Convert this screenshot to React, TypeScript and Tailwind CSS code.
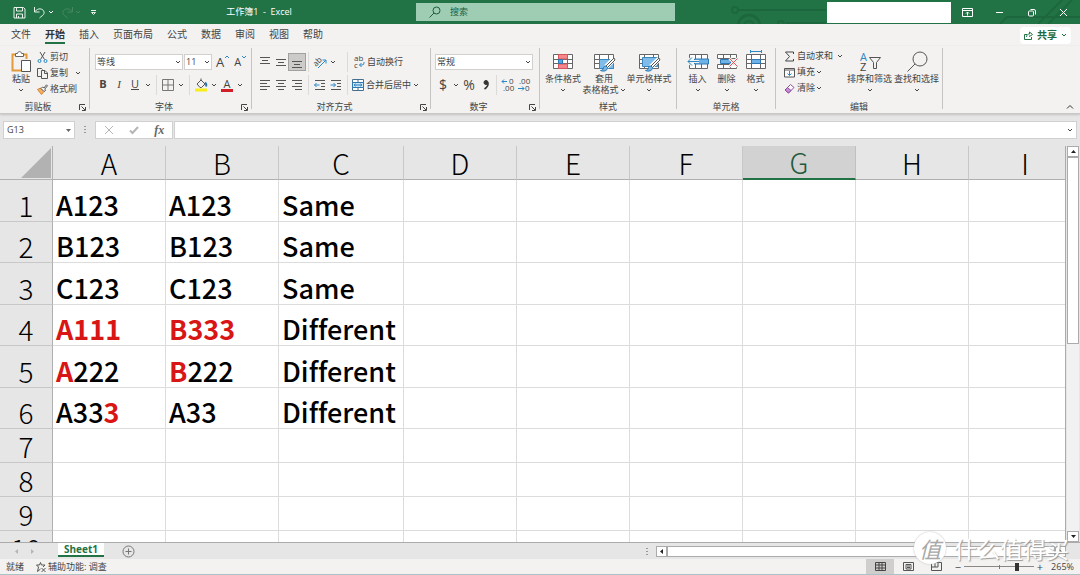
import React from "react";

type IconProps = { children: React.ReactNode; size?: number; className?: string };

const Icon = ({ children, size = 14, className = "" }: IconProps) => (
  <svg
    width={size}
    height={size}
    viewBox={`0 0 ${size} ${size}`}
    fill="none"
    stroke="#555555"
    aria-hidden="true"
    className={`shrink-0 overflow-visible ${className}`}
  >
    {children}
  </svg>
);

const Chevron = ({ className = "" }: { className?: string }) => (
  <svg width="6" height="6" viewBox="0 0 6 6" fill="none" stroke="currentColor" aria-hidden="true" className={`shrink-0 ${className}`}>
    <path d="M1 2l2 2 2-2" />
  </svg>
);

const Tool = ({ label, active, children }: { label: string; active?: boolean; children: React.ReactNode }) => (
  <button
    aria-label={label}
    className={`w-4 h-4 shrink-0 flex items-center justify-center ${active ? "bg-[#cdcbca] outline outline-[#a3a1a0]" : ""}`}
  >
    {children}
  </button>
);

const More = ({ label }: { label: string }) => (
  <button aria-label={label} className="w-2.5 h-4 shrink-0 flex items-center justify-center">
    <Chevron />
  </button>
);

const Rule = () => <div className="w-px h-5 mx-[3px] shrink-0 bg-[#dcdad9]" />;

const Group = ({ title, launcher, width, children }: { title: string; launcher?: boolean; width: string; children: React.ReactNode }) => (
  <>
    <section aria-label={title} className={`${width} shrink-0 flex flex-col`}>
      <div className="h-[55px]">{children}</div>
      <div className="h-3 flex items-center">
        <span className="flex-1 text-center">{title}</span>
        {launcher && (
          <button aria-label={`${title}设置`} className="w-3 h-3 mr-px flex items-center justify-center">
            <Icon size={7}>
              <path d="M.5 6V.5H6M2.5 2.5L6 6M6.5 3v3.5H3" stroke="#444444" />
            </Icon>
          </button>
        )}
      </div>
    </section>
    <div className="w-px shrink-0 mt-[2px] mb-1 bg-[#c6c4c3]" />
  </>
);

const BigButton = ({ icon, lines, width }: { icon: React.ReactNode; lines: string[]; width: string }) => (
  <button className={`${width} shrink-0 flex flex-col items-center pt-[5px] whitespace-nowrap`}>
    <span className="h-[22px] flex items-center">{icon}</span>
    <span className="leading-[11px]">{lines[0]}</span>
    <span className="h-[11px] leading-[11px] flex items-center gap-px">
      {lines[1]}
      <Chevron />
    </span>
  </button>
);

const SmallButton = ({ icon, label, more, gap = "gap-0.5" }: { icon: React.ReactNode; label: string; more?: boolean; gap?: string }) => (
  <button className="h-4 flex items-center gap-[2px] whitespace-nowrap">
    {icon}
    <span className={`flex items-center ${gap}`}>
      {label}
      {more && <Chevron />}
    </span>
  </button>
);

const Lines = ({ rows, y = 3 }: { rows: number[][]; y?: number }) => (
  <Icon size={12}>
    {rows.map(([from, to], i) => (
      <path key={i} d={`M${from} ${y + i * 3 - 0.5}H${to}`} />
    ))}
  </Icon>
);

const TableBase = () => (
  <>
    <path d="M1.5 3.5h19v14h-19z" fill="#ffffff" stroke="#666666" />
    <path d="M1.5 8.5h19M1.5 12.5h19M6.5 3.5v14M15.5 3.5v14" stroke="#666666" />
  </>
);

const Brush = () => (
  <>
    <path d="M21 8l-8 8" stroke="#ffffff" strokeWidth="5" />
    <path d="M21 7l-8 8 1.500 1.500L22 9z" fill="#ffffff" stroke="#555555" />
    <path d="M13 15c-2 0-2.500 1-3 3-.4 1-1.500 1.500-2.500 1.500 3 1.300 7 .5 7-3z" fill="#7ab8e6" stroke="#2675b0" />
  </>
);

const icons = {
  paste: (
    <Icon size={22}>
      <path d="M5 3.500H2.500v16H11" stroke="#e39a3b" strokeWidth="2" />
      <path d="M13 3.500h3.500V8" stroke="#e39a3b" strokeWidth="2" />
      <path d="M5.500 5.500v-3h2c0-2.500 4-2.500 4 0h2v3z" fill="#ffffff" stroke="#666666" />
      <path d="M11.500 9.500h9v11h-9z" fill="#ffffff" stroke="#555555" />
    </Icon>
  ),
  cut: (
    <Icon size={11}>
      <path d="M3 0l4.500 7.500M8 0L3.500 7.500" stroke="#555555" />
      <circle cx="2.500" cy="9" r="1.500" stroke="#2b88c4" />
      <circle cx="8.500" cy="9" r="1.500" stroke="#2b88c4" />
    </Icon>
  ),
  copy: (
    <Icon size={11}>
      <path d="M4 8.500H.5v-8h4l1 1M4.500 2.500h3.500l2.500 2.500v5.500h-6zM7.500 2.500V5.500h3" />
    </Icon>
  ),
  painter: (
    <Icon size={11}>
      <path d="M.5 5.500l3-1.500 3.500 3.500-2.500 3z" fill="#f3b163" stroke="#d9822b" />
      <path d="M4 4.500l1.500-1.500 1.500 1L9.500.8l1 1L7.800 5l.7 1.500L7 7.500z" fill="#ffffff" />
    </Icon>
  ),
  border: (
    <Icon size={12}>
      <path d="M.5.5h11v11H.5zM6 .5v11M.5 6h11" stroke="#777777" />
    </Icon>
  ),
  fill: (
    <Icon size={14}>
      <path d="M3 6l4-4 4 4-3.500 3.500H6zM7 2v-1.500" stroke="#555555" />
      <path d="M11 4.500c1.500 1 1.500 2.500 1 4" stroke="#2b78b4" strokeWidth="2" />
      <path d="M1 12h12" stroke="#f7ee1a" strokeWidth="3" />
    </Icon>
  ),
  orient: (
    <Icon size={12}>
      <text x="-1" y="8" fontSize="8" fill="#444444" stroke="none" transform="rotate(-45 4 6)">ab</text>
      <path d="M4 12L11.500 4.500M8.500 4H12V7.500" stroke="#2b88c4" />
    </Icon>
  ),
  outdent: (
    <Icon size={12}>
      <path d="M1 1.500h10M7 4.500h4M7 7.500h4M1 10.500h10" />
      <path d="M5.500 6h-5M2.500 4l-2 2 2 2" stroke="#2b88c4" />
    </Icon>
  ),
  indent: (
    <Icon size={12}>
      <path d="M1 1.500h10M7 4.500h4M7 7.500h4M1 10.500h10" />
      <path d="M.5 6h5M3.500 4l2 2-2 2" stroke="#2b88c4" />
    </Icon>
  ),
  wrap: (
    <Icon size={12}>
      <text x="1" y="5" fontSize="8" fill="#444444" stroke="none">ab</text>
      <text x="1" y="12" fontSize="8" fill="#444444" stroke="none">c</text>
      <path d="M11 6v1q0 2-2 2H6.500M8.500 7l-2 2 2 2" stroke="#2b88c4" />
    </Icon>
  ),
  merge: (
    <Icon size={12}>
      <path d="M.5.5h11v11H.5z" fill="#ffffff" stroke="#44708f" />
      <path d="M.5 3.500h11v5H.5z" fill="#cbe6f7" stroke="#2b78b4" />
      <path d="M6 .5v3M6 8.500v3" stroke="#44708f" />
      <path d="M2 6h8M3.500 4.800L2.200 6l1.300 1.200M8.500 4.800L9.800 6 8.500 7.200" stroke="#2b78b4" />
    </Icon>
  ),
  moreDecimals: (
    <Icon size={14}>
      <path d="M6 3.500H1M3 1.500l-2 2 2 2" stroke="#2b88c4" />
      <text x="8" y="6" fontSize="8" fill="#444444" stroke="none">0</text>
      <text x="2" y="13" fontSize="8" fill="#444444" stroke="none">.00</text>
    </Icon>
  ),
  lessDecimals: (
    <Icon size={14}>
      <path d="M1 10.500h6M5 8.500l2 2-2 2" stroke="#2b88c4" />
      <text x="2" y="6" fontSize="8" fill="#444444" stroke="none">.00</text>
      <text x="8" y="13" fontSize="8" fill="#444444" stroke="none">0</text>
    </Icon>
  ),
  conditional: (
    <Icon size={22}>
      <TableBase />
      <path d="M6.500 3.500h9v4.500h-9zM6.500 13h9v4.500h-9z" fill="#f5868c" stroke="#d5545c" />
      <path d="M6.500 8.500h4v4h-4z" fill="#5ba5dc" stroke="#2b78b4" />
    </Icon>
  ),
  tableFormat: (
    <Icon size={22}>
      <TableBase />
      <path d="M6.500 8.500h14v9h-14z" fill="#7fbcea" stroke="#3a86bf" />
      <Brush />
    </Icon>
  ),
  cellStyle: (
    <Icon size={22}>
      <TableBase />
      <path d="M4.500 6.500h15v9h-15z" fill="#7fbcea" stroke="#3a86bf" />
      <Brush />
    </Icon>
  ),
  insert: (
    <Icon size={24}>
      <path d="M3.500 4.500h18v14h-18zM9.500 4.500v14M15.500 4.500v14" fill="#ffffff" stroke="#666666" />
      <path d="M8.500 9h14v5h-14z" fill="#6fb3e6" stroke="#2b78b4" />
      <path d="M13 11.500H2M6 7.500l-4 4 4 4" stroke="#f3f2f1" strokeWidth="3" />
      <path d="M13 11.500H2M6 7.500l-4 4 4 4" stroke="#2b88c4" />
    </Icon>
  ),
  remove: (
    <Icon size={22}>
      <path d="M1.500 3.500h19v4h-19zM1.500 13.500h19v4h-19zM7.500 3.500v4M14.500 3.500v4M7.500 13.500v4M14.500 13.500v4" fill="#ffffff" stroke="#666666" />
      <path d="M4.500 8.500h10v4h-10z" fill="#6fb3e6" stroke="#2b78b4" />
      <path d="M13.500 7.500l8 8M21.500 7.500l-8 8" stroke="#f3f2f1" strokeWidth="3" />
      <path d="M13.500 7.500l8 8M21.500 7.500l-8 8" stroke="#e0555c" />
    </Icon>
  ),
  format: (
    <Icon size={22}>
      <path d="M1.500 3.500h19v14h-19z" fill="#ffffff" stroke="#666666" />
      <path d="M1.500 8.500h19M1.500 12.500h19M6.500 3.500v14M15.500 3.500v14" stroke="#666666" />
      <path d="M6.500 8.500h9v4h-9z" fill="#6fb3e6" stroke="#2b78b4" />
      <path d="M5 .5h12M5.500-1v3M16.500-1v3" stroke="#2b88c4" />
    </Icon>
  ),
  sum: (
    <Icon size={11}>
      <path d="M9.500 3V1H1.500L5.500 5.500 1.500 10h8V8" stroke="#444444" />
    </Icon>
  ),
  fillDown: (
    <Icon size={11}>
      <path d="M.5 1.500h10v8.500H.5zM.5 3h10" fill="#ffffff" />
      <path d="M5.500 4v4.500M3.500 6.500l2 2 2-2" stroke="#2b88c4" />
    </Icon>
  ),
  clear: (
    <Icon size={11}>
      <path d="M1 7l5.500-5.500 3.500 3L4.500 10z" fill="#ffffff" stroke="#8e4a9e" />
      <path d="M1 7l2.500-2.500 3.500 3L4.500 10z" fill="#c58ed2" stroke="#8e4a9e" />
    </Icon>
  ),
  sort: (
    <Icon size={22}>
      <text x="1" y="10" fontSize="11" fill="#2b88c4" stroke="none">A</text>
      <text x="1" y="20" fontSize="11" fill="#444444" stroke="none">Z</text>
      <path d="M10.500 6.500h11l-4 5v6h-3v-6z" />
    </Icon>
  ),
  find: (
    <Icon size={22}>
      <circle cx="14" cy="8" r="7" />
      <path d="M9 13l-7.500 7.500" />
    </Icon>
  ),
};

const tabs = ["文件", "开始", "插入", "页面布局", "公式", "数据", "审阅", "视图", "帮助"];

const TitleBar = () => (
  <header className="relative h-6 shrink-0 flex items-center bg-[#217346] text-white">
    <svg width="360" height="24" fill="none" stroke="#1d673f" aria-hidden="true" className="absolute right-0 top-0">
      <circle cx="15" cy="10" r="3" strokeWidth="2" />
      <path d="M18 10h88M66 23h40M280 24l7-7h73M318 24l24-24M328 24l24-24" strokeWidth="2" />
      <circle cx="29" cy="26" r="11" strokeWidth="3" />
      <circle cx="29" cy="26" r="5" strokeWidth="2" />
      <circle cx="61" cy="24" r="3" strokeWidth="2" />
    </svg>
    <div className="w-[200px] shrink-0 pl-[13px] flex items-center">
      <button aria-label="保存" className="w-[13px]">
        <Icon size={13}>
          <path d="M1 1.500h9.500l1.500 1.500v9H1zM3.500 1.500v3.500h6V1.500M3.500 12V8h6v4M5.500 10v2" stroke="#e8f3ec" />
        </Icon>
      </button>
      <button aria-label="撤销" className="ml-[7px] w-[13px]">
        <Icon size={13}>
          <path d="M1.500 1v5h5M2 5.500c4-5 10-2 9 2-.3 1.500-3 3-4.500 4.500" stroke="#e8f3ec" />
        </Icon>
      </button>
      <Chevron className="ml-[2px]" />
      <button aria-label="恢复" disabled className="ml-[7px] w-[13px]">
        <Icon size={13}>
          <path d="M11.500 1v5h-5M11 5.500c-4-5-10-2-9 2 .3 1.500 3 3 4.500 4.500" stroke="#46895f" />
        </Icon>
      </button>
      <Chevron className="ml-px text-[#46895f]" />
      <button aria-label="自定义快速访问工具栏" className="ml-[9px]">
        <Icon size={7}>
          <path d="M1 1.500h5M1.500 3.500l2 2 2-2z" stroke="#e8f3ec" />
        </Icon>
      </button>
    </div>
    <h1 className="w-[118px] shrink-0 text-center text-[9px] whitespace-pre">工作簿1  -  Excel</h1>
    <label className="ml-[98px] w-[259px] h-[18px] flex items-center bg-[#9fcdb3] pl-[13px]">
      <Icon size={12}>
        <circle cx="7.500" cy="4.500" r="3.500" stroke="#1d5e3a" />
        <path d="M5 7l-4.500 4.500" stroke="#1d5e3a" />
      </Icon>
      <input aria-label="搜索" placeholder="搜索" className="flex-1 min-w-0 ml-[9px] bg-transparent text-[9px] outline-none placeholder:text-[#1d5e3a]" />
    </label>
    <div className="flex-1" />
    <div className="relative w-[124px] h-[21px] shrink-0 bg-white" />
    <div className="relative shrink-0 flex pr-px">
      <button aria-label="功能区显示选项" className="w-8 flex justify-center">
        <Icon size={11}>
          <path d="M.5 1.500h10v8H.5zM.5 3.500h10M5.500 8.500V5M4 6.500L5.500 5 7 6.500" stroke="#ffffff" />
        </Icon>
      </button>
      <button aria-label="最小化" className="w-8 flex justify-center">
        <Icon size={11}>
          <path d="M2 5.500h7" stroke="#ffffff" />
        </Icon>
      </button>
      <button aria-label="还原" className="w-8 flex justify-center">
        <Icon size={11}>
          <rect x="2.500" y="4" width="5" height="5" rx="1" stroke="#ffffff" />
          <path d="M4.500 2.500h3.500q1.500 0 1.500 1.500v3.500" stroke="#ffffff" />
        </Icon>
      </button>
      <button aria-label="关闭" className="w-8 flex justify-center">
        <Icon size={11}>
          <path d="M2 2l7 7M9 2l-7 7" stroke="#ffffff" />
        </Icon>
      </button>
    </div>
  </header>
);

const TabBar = () => (
  <nav className="h-[22px] shrink-0 flex items-center pl-[11px] pr-[9px] text-[10px]">
    <div className="flex-1 flex gap-[14px]">
      {tabs.map((tab) => (
        <button
          key={tab}
          className={`h-[18px] leading-4 border-b-2 ${tab === "开始" ? "font-bold text-[#333333] border-[#217346]" : "border-transparent"}`}
        >
          {tab}
        </button>
      ))}
    </div>
    <button className="h-[17px] w-[51px] flex items-center justify-between px-1 rounded-sm bg-white font-bold text-[#1c6b41]">
      <Icon size={9}>
        <path d="M3 3.500H.5v5h7V6M2.500 6c0-2 1.500-3 3-3V1l3 2.500-3 2V4.500" stroke="#217346" />
      </Icon>
      共享
      <Chevron />
    </button>
  </nav>
);

const Ribbon = () => (
  <div className="relative z-10 h-[68px] shrink-0 flex border-b border-[#c9c7c6] shadow-[0_1px_2px_#c4c4c4]">
    <Group title="剪贴板" launcher width="w-[89px]">
      <div className="flex pl-[9px]">
        <BigButton icon={icons.paste} lines={["粘贴"]} width="w-6" />
        <div className="pt-[3px] ml-1 flex flex-col">
          <SmallButton icon={icons.cut} label="剪切" />
          <SmallButton icon={icons.copy} label="复制" more gap="gap-[7px]" />
          <SmallButton icon={icons.painter} label="格式刷" />
        </div>
      </div>
    </Group>

    <Group title="字体" launcher width="w-[161px]">
      <div className="pl-[5px] pt-[5px] flex flex-col gap-[2px]">
        <div className="h-[21px] flex items-center">
          <div className="relative w-[88px]">
            <select aria-label="字体" className="appearance-none w-full h-4 pl-px bg-white border border-[#d2d0ce]">
              <option>等线</option>
            </select>
            <Chevron className="absolute right-[2px] top-[5px] pointer-events-none" />
          </div>
          <div className="relative w-7 ml-px">
            <select aria-label="字号" className="appearance-none w-full h-4 pl-px bg-white border border-[#d2d0ce]">
              <option>11</option>
            </select>
            <Chevron className="absolute right-[2px] top-[5px] pointer-events-none" />
          </div>
          <button aria-label="增大字号" className="ml-1 flex text-[13px] leading-4">
            A<Chevron className="rotate-180 text-[#2b88c4]" />
          </button>
          <button aria-label="减小字号" className="ml-1 flex text-[11px] leading-4">
            A<Chevron className="text-[#2b88c4]" />
          </button>
        </div>
        <div className="h-[21px] flex items-center text-[11px]">
          <Tool label="加粗"><b>B</b></Tool>
          <Tool label="倾斜"><i className="font-['Liberation_Serif']">I</i></Tool>
          <Tool label="下划线"><u>U</u></Tool>
          <More label="下划线选项" />
          <Rule />
          <Tool label="边框">{icons.border}</Tool>
          <More label="边框选项" />
          <Rule />
          <Tool label="填充颜色">{icons.fill}</Tool>
          <More label="填充颜色选项" />
          <Tool label="字体颜色">
            <span className="w-3 h-[14px] leading-[11px] border-b-3 border-[#d01f26]">A</span>
          </Tool>
          <More label="字体颜色选项" />
        </div>
      </div>
    </Group>

    <Group title="对齐方式" launcher width="w-[178px]">
      <div className="pl-[5px] pt-[5px] flex flex-col gap-[2px]">
        <div className="h-[21px] flex items-center">
          <Tool label="顶端对齐"><Lines rows={[[1, 11], [3, 9], [1, 11]]} y={2} /></Tool>
          <Tool label="垂直居中"><Lines rows={[[1, 11], [3, 9], [1, 11]]} y={4} /></Tool>
          <Tool label="底端对齐" active><Lines rows={[[1, 11], [3, 9], [1, 11]]} y={6} /></Tool>
          <Rule />
          <div className="w-8 flex">
            <Tool label="方向">{icons.orient}</Tool>
            <More label="方向选项" />
          </div>
          <Rule />
          <button className="flex items-center gap-[2px] pl-[2px]">{icons.wrap}自动换行</button>
        </div>
        <div className="h-[21px] flex items-center">
          <Tool label="左对齐"><Lines rows={[[1, 11], [1, 8], [1, 11], [1, 8]]} y={2} /></Tool>
          <Tool label="居中"><Lines rows={[[1, 11], [3, 9], [1, 11], [3, 9]]} y={2} /></Tool>
          <Tool label="右对齐"><Lines rows={[[1, 11], [4, 11], [1, 11], [4, 11]]} y={2} /></Tool>
          <Rule />
          <div className="w-8 flex">
            <Tool label="减少缩进量">{icons.outdent}</Tool>
            <Tool label="增加缩进量">{icons.indent}</Tool>
          </div>
          <Rule />
          <button className="flex items-center gap-[2px] pl-px">{icons.merge}合并后居中</button>
          <More label="合并选项" />
        </div>
      </div>
    </Group>

    <Group title="数字" launcher width="w-[108px]">
      <div className="pl-1 pt-[5px] flex flex-col gap-[2px]">
        <div className="h-[21px] flex items-center">
          <div className="relative w-[98px]">
            <select aria-label="数字格式" className="appearance-none w-full h-4 pl-px bg-white border border-[#d2d0ce]">
              <option>常规</option>
            </select>
            <Chevron className="absolute right-[2px] top-[5px] pointer-events-none" />
          </div>
        </div>
        <div className="h-[21px] flex items-center text-[14px]">
          <Tool label="会计数字格式">$</Tool>
          <More label="会计数字格式选项" />
          <Tool label="百分比样式">%</Tool>
          <Tool label="千位分隔样式">
            <Icon size={12}>
              <circle cx="7" cy="3.500" r="2" fill="#333333" stroke="#333333" />
              <path d="M9 3.500c.4 3-1 5-3.500 6.500" stroke="#333333" strokeWidth="1.500" />
            </Icon>
          </Tool>
          <Rule />
          <Tool label="增加小数位数">{icons.moreDecimals}</Tool>
          <Tool label="减少小数位数">{icons.lessDecimals}</Tool>
        </div>
      </div>
    </Group>

    <Group title="样式" width="w-[136px]">
      <div className="flex pl-[2px]">
        <BigButton icon={icons.conditional} lines={["条件格式"]} width="w-[42px]" />
        <BigButton icon={icons.tableFormat} lines={["套用", "表格格式"]} width="w-10" />
        <BigButton icon={icons.cellStyle} lines={["单元格样式"]} width="w-[50px]" />
      </div>
    </Group>

    <Group title="单元格" width="w-[98px]">
      <div className="flex pl-[6px]">
        <BigButton icon={icons.insert} lines={["插入"]} width="w-[29px]" />
        <BigButton icon={icons.remove} lines={["删除"]} width="w-[29px]" />
        <BigButton icon={icons.format} lines={["格式"]} width="w-[29px]" />
      </div>
    </Group>

    <Group title="编辑" width="w-[166px]">
      <div className="flex pl-2">
        <div className="w-[62px] pt-[2px] flex flex-col">
          <SmallButton icon={icons.sum} label="自动求和" more gap="gap-1" />
          <SmallButton icon={icons.fillDown} label="填充" more gap="gap-px" />
          <SmallButton icon={icons.clear} label="清除" more gap="gap-px" />
        </div>
        <BigButton icon={icons.sort} lines={["排序和筛选"]} width="w-[47px]" />
        <BigButton icon={icons.find} lines={["查找和选择"]} width="w-[47px]" />
      </div>
    </Group>

    <div className="flex-1 flex items-end justify-end pr-[6px] pb-[2px]">
      <button aria-label="折叠功能区">
        <Icon size={8}>
          <path d="M1 5.500l3-3 3 3" stroke="#333333" />
        </Icon>
      </button>
    </div>
  </div>
);

const FormulaBar = () => (
  <div className="h-8 shrink-0 flex items-start pt-[7px] pl-[3px] pr-[3px]">
    <div className="w-[72px] h-[18px] flex items-center bg-white border border-[#d0d0d0]">
      <input aria-label="名称框" defaultValue="G13" className="flex-1 min-w-0 pl-[3px] text-[9px] outline-none" />
      <button aria-label="名称列表" className="w-3 flex justify-center">
        <svg width="5" height="3" aria-hidden="true"><path d="M0 0h5L2.500 3z" fill="#666666" /></svg>
      </button>
    </div>
    <svg width="20" height="18" fill="#999999" aria-hidden="true">
      <path d="M9 5h2v1H9zM9 8h2v1H9zM9 11h2v1H9z" />
    </svg>
    <div className="w-[78px] h-[18px] flex items-center justify-around bg-white border border-[#d0d0d0]">
      <button aria-label="取消">
        <Icon size={10}><path d="M1 1l8 8M9 1L1 9" stroke="#b5b5b5" /></Icon>
      </button>
      <button aria-label="输入">
        <Icon size={10}><path d="M1 5.500L3.500 8 9 2" stroke="#b5b5b5" strokeWidth="2" /></Icon>
      </button>
      <button aria-label="插入函数" className="font-['Liberation_Serif'] italic font-bold text-[12px] leading-4 text-[#666666]">fx</button>
    </div>
    <div className="flex-1 ml-px h-[18px] flex items-center bg-white border border-[#d0d0d0]">
      <input aria-label="编辑栏" className="flex-1 min-w-0 outline-none" />
      <button aria-label="展开编辑栏" className="w-3 flex justify-center"><Chevron /></button>
    </div>
  </div>
);

const columns = ["A", "B", "C", "D", "E", "F", "G", "H", "I"];

// characters that differ between A and B are marked red
type Cell = { pre?: string; red?: string; post?: string };
const rows: Cell[][] = [
  [{ pre: "A123" }, { pre: "A123" }, { pre: "Same" }],
  [{ pre: "B123" }, { pre: "B123" }, { pre: "Same" }],
  [{ pre: "C123" }, { pre: "C123" }, { pre: "Same" }],
  [{ red: "A111" }, { red: "B333" }, { pre: "Different" }],
  [{ red: "A", post: "222" }, { red: "B", post: "222" }, { pre: "Different" }],
  [{ pre: "A33", red: "3" }, { pre: "A33" }, { pre: "Different" }],
  [], [], [], [],
];

const Sheet = () => (
  <div className="flex-1 min-h-0 flex">
    <div className="flex-1 min-w-0 overflow-hidden border-r border-[#ababab]">
      <table className="table-fixed w-[1082px] border-separate border-spacing-0 font-['Noto_Sans_CJK_SC',sans-serif] text-[28px] leading-8 text-black bg-white">
        <colgroup>
          <col className="w-[53px]" />
          {columns.map((c) => (
            <col key={c} className={c === "C" ? "w-[125px]" : "w-[113px]"} />
          ))}
        </colgroup>
        <thead>
          <tr className="h-[34px] bg-[#e6e6e6]">
            <th className="p-0 border-r border-b border-[#b0b0b0] align-bottom">
              <svg width="30" height="30" className="ml-auto mr-px mb-px" aria-hidden="true"><path d="M30 0v30H0z" fill="#b2b2b2" /></svg>
            </th>
            {columns.map((c) => (
              <th
                key={c}
                scope="col"
                className={`p-0 border-r align-bottom font-light ${
                  c === "G" ? "bg-[#d2d2d2] text-[#1e5b3c] border-r-[#c0c0c0] border-b-2 border-b-[#217346]" : "border-r-[#c8c8c8] border-b border-b-[#b0b0b0]"
                }`}
              >
                {c}
              </th>
            ))}
          </tr>
        </thead>
        <tbody>
          {rows.map((row, i) => (
            <tr key={i} className={i > 5 ? "h-[34px]" : i % 2 ? "h-[41px]" : "h-[42px]"}>
              <th scope="row" className="p-0 bg-[#e6e6e6] border-r border-b border-r-[#b0b0b0] border-b-[#c8c8c8] align-bottom font-light">
                {i + 1}
              </th>
              {columns.map((c, j) => (
                <td key={c} className="p-0 pl-[3px] border-r border-b border-[#dcdcdc] align-bottom text-[27px] font-medium [font-variant-ligatures:none] whitespace-nowrap">
                  {row[j]?.pre}
                  {row[j]?.red && <span className="text-[#d81616] font-bold">{row[j].red}</span>}
                  {row[j]?.post}
                </td>
              ))}
            </tr>
          ))}
        </tbody>
      </table>
    </div>
    <div className="w-[14px] shrink-0 pl-px pr-px flex flex-col bg-[#e6e6e6]">
      <button aria-label="向上滚动" className="h-[11px] flex items-center justify-center bg-white border border-[#ababab]">
        <svg width="5" height="3" aria-hidden="true"><path d="M0 3h5L2.500 0z" fill="#222222" /></svg>
      </button>
      <div className="flex-1 bg-[#f1f1f1]">
        <div className="h-1/2 bg-white border border-[#ababab]" />
      </div>
      <button aria-label="向下滚动" className="h-[11px] flex items-center justify-center bg-white border border-[#ababab]">
        <svg width="5" height="3" aria-hidden="true"><path d="M0 0h5L2.500 3z" fill="#222222" /></svg>
      </button>
    </div>
  </div>
);

const SheetTabs = () => (
  <div className="h-[17px] shrink-0 flex items-center border-t border-[#ababab]">
    <div className="w-[58px] flex justify-center gap-3 pr-2">
      <svg width="4" height="5" aria-hidden="true"><path d="M3 0v5L0 2.500z" fill="#b5b5b5" /></svg>
      <svg width="4" height="5" aria-hidden="true"><path d="M0 0v5L3 2.500z" fill="#b5b5b5" /></svg>
    </div>
    <button className="w-[46px] h-[14px] self-start leading-3 bg-white border-b-2 border-[#217346] font-bold text-[10px] text-[#217346]">
      Sheet1
    </button>
    <button aria-label="新工作表" className="ml-[18px]">
      <Icon size={13}>
        <circle cx="6.500" cy="6.500" r="5.500" stroke="#777777" />
        <path d="M3.500 6.500h6M6.500 3.500v6" stroke="#777777" />
      </Icon>
    </button>
    <div className="flex-1" />
    <svg width="18" height="11" fill="#999999" aria-hidden="true">
      <path d="M8 2h2v1H8zM8 5h2v1H8zM8 8h2v1H8z" />
    </svg>
    <div className="w-[38%] h-[11px] flex mr-[14px]">
      <button aria-label="向左滚动" className="w-[11px] flex items-center justify-center bg-white border border-[#ababab]">
        <svg width="3" height="5" aria-hidden="true"><path d="M3 0v5L0 2.500z" fill="#222222" /></svg>
      </button>
      <div className="flex-1 bg-white border border-[#ababab]" />
      <button aria-label="向右滚动" className="w-[11px] flex items-center justify-center bg-white border border-[#ababab]">
        <svg width="3" height="5" aria-hidden="true"><path d="M0 0v5l3-2.500z" fill="#222222" /></svg>
      </button>
    </div>
  </div>
);

const StatusBar = () => (
  <footer className="h-4 shrink-0 flex items-center pl-[6px] pr-[6px] bg-[#f3f2f1] border-b border-[#a9c4c4] text-[9px]">
    <span>就绪</span>
    <button className="ml-3 flex items-center gap-[2px]">
      <Icon size={10}>
        <path d="M4.500.5l1 2.500h3.500L7 5M4.500.5L3.500 3H.5l2 2-1 4.500L4.500 7M5.500 6l4 4M9.500 6l-4 4" />
      </Icon>
      辅助功能: 调查
    </button>
    <div className="flex-1" />
    <button aria-label="普通" className="w-7 h-[15px] flex items-center justify-center bg-[#d0cecd]">
      <Icon size={11}><path d="M.5 1.500h10v8H.5zM4 1.500v8M7 1.500v8M.5 4h10M.5 7h10" stroke="#444444" /></Icon>
    </button>
    <button aria-label="页面布局" className="w-7 flex items-center justify-center">
      <Icon size={11}><path d="M.5 1.500h10v8H.5zM3 3.500h5v4.500H3zM4 5h3M4 6.500h3" /></Icon>
    </button>
    <button aria-label="分页预览" className="w-7 flex items-center justify-center">
      <Icon size={11}><path d="M.5 1.500h10v8H.5zM4 1.500V6H.5M7 1.500V6H4" /></Icon>
    </button>
    <button aria-label="缩小" className="ml-[2px] w-3 leading-3 text-[11px]">−</button>
    <div className="relative w-[70px] h-3 flex items-center">
      <input
        type="range"
        aria-label="显示比例"
        defaultValue={77}
        className="appearance-none w-full h-px bg-[#888888] [&::-webkit-slider-thumb]:appearance-none [&::-webkit-slider-thumb]:w-1 [&::-webkit-slider-thumb]:h-2 [&::-webkit-slider-thumb]:bg-[#333333]"
      />
      <span className="absolute left-1/2 top-1 w-px h-1 bg-[#777777]" />
    </div>
    <button aria-label="放大" className="w-3 leading-3 text-[11px]">+</button>
    <span className="w-7 text-right">265%</span>
  </footer>
);

const Watermark = () => (
  <div className="absolute right-[11px] bottom-[11px] z-20 flex items-center gap-2 pointer-events-none font-['Noto_Sans_CJK_SC',sans-serif]">
    <span className="w-8 h-8 rounded-full bg-white shadow-[0_0_2px_#bbbbbb] flex items-center justify-center text-[22px] leading-8 italic text-[#a8a8a8]">值</span>
    <span className="text-[23px] leading-8 text-white [text-shadow:1px_1px_1px_#999999]">什么值得买</span>
  </div>
);

const App = () => {
  return (
    <div className="relative h-screen flex flex-col overflow-hidden bg-[#e6e6e6] text-[#444444] text-[9px] font-['Open_Sans','Noto_Sans_CJK_SC',sans-serif]">
      <TitleBar />
      <div className="shrink-0 bg-[#f3f2f1]">
        <TabBar />
        <Ribbon />
      </div>
      <FormulaBar />
      <Sheet />
      <SheetTabs />
      <StatusBar />
      <Watermark />
    </div>
  );
};

export default App;
